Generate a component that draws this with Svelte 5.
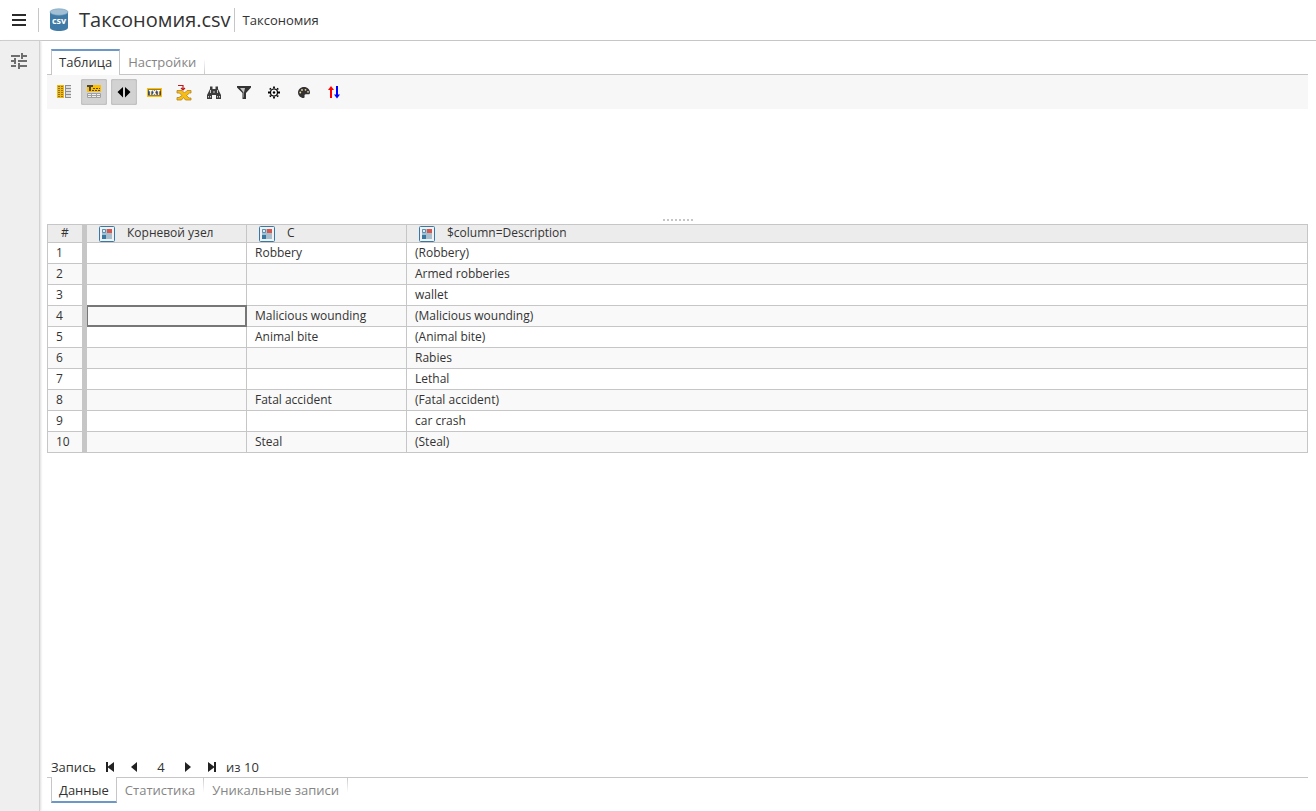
<script>
  const rows = [
    ['', 'Robbery', '(Robbery)'],
    ['', '', 'Armed robberies'],
    ['', '', 'wallet'],
    ['', 'Malicious wounding', '(Malicious wounding)'],
    ['', 'Animal bite', '(Animal bite)'],
    ['', '', 'Rabies'],
    ['', '', 'Lethal'],
    ['', 'Fatal accident', '(Fatal accident)'],
    ['', '', 'car crash'],
    ['', 'Steal', '(Steal)']
  ];
  const columns = ['Корневой узел', 'C', '$column=Description'];
  const tools = ['columns', 'header', 'fit', 'text', 'export', 'find', 'filter', 'settings', 'palette', 'sort'];
  const labels = ['Столбцы', 'Заголовок', 'Ширина', 'Текст', 'Экспорт', 'Поиск', 'Фильтр', 'Параметры', 'Цвета', 'Сортировка'];
  let pressed = $state([false, true, true, false, false, false, false, false, false, false]);
  let view = $state('Таблица');
  let section = $state('Данные');
  let current = $state(4);
  const go = (n) => (current = Math.min(rows.length, Math.max(1, n)));
</script>

<div class="app">
  <header>
    <button class="menu" aria-label="Меню">
      <svg width="16" height="12" viewBox="0 0 16 12"><path d="M1 0h14v2H1zM1 5h14v2H1zM1 10h14v2H1z" fill="#2b2b2b" /></svg>
    </button>
    <span class="rule"></span>
    <svg class="csv" width="20" height="24" viewBox="0 0 20 24">
      <path d="M1 4v15.500c0 2 4 3.500 9 3.500s9-1.500 9-3.500V4z" fill="#3f7ba6" />
      <ellipse cx="10" cy="4" rx="9" ry="3.200" fill="#a3bfd3" stroke="#6f9dbd" stroke-width=".6" />
      <text x="10" y="16" text-anchor="middle" font-size="9" font-weight="700" fill="#fff">csv</text>
    </svg>
    <h1>Таксономия.csv</h1>
    <span class="rule"></span>
    <span class="crumb">Таксономия</span>
  </header>

  <div class="body">
    <aside>
      <button aria-label="Параметры">
        <svg width="18" height="18" viewBox="0 0 18 18" fill="none" stroke="#6e6e6e" stroke-width="2">
          <path d="M1 4h9M13 4h4M12 1v6M1 9h4M8 9h9M5 6v6M1 14h5M10 14h7M9 11v6" />
        </svg>
      </button>
    </aside>

    <main>
      <nav class="tabs top">
        {#each ['Таблица', 'Настройки'] as t}
          <button class:active={view === t} onclick={() => (view = t)}>{t}</button>
        {/each}
      </nav>

      <div class="toolbar">
        {#each tools as tool, i}
          <button class:pressed={pressed[i]} aria-label={labels[i]} aria-pressed={pressed[i]} onclick={() => (pressed[i] = !pressed[i])}>
            <svg width="16" height="16" viewBox="0 0 16 16">
              {#if tool === 'columns'}
                <path d="M1 0h7v13H1z" fill="#f2b90c" />
                <path d="M2 1.500h2M5 1.500h2M2 3.500h2M5 3.500h2M2 5.500h2M5 5.500h2M2 7.500h2M5 7.500h2M2 9.500h2M5 9.500h2M2 11.500h2M5 11.500h2" stroke="#8a732c" />
                <path d="M9 0h6v13H9z" fill="#dedede" />
                <path d="M9.500 0v13M9 .5h6M10 3.500h5M10 6.500h5M10 9.500h5M10 12.500h5" stroke="#8c8c8c" fill="none" />
              {:else if tool === 'header'}
                <path d="M1 0h14v7H1z" fill="#fcbf06" />
                <path d="M1 1h6M4 1v5" stroke="#50482e" stroke-width="2" />
                <path d="M7 3.500h2M10 3.500h2M13 3.500h1M6 5.500h2M9 5.500h2M12 5.500h2" stroke="#50482e" />
                <path d="M1.500 8.500h13v4h-13zM1 10.500h14M5.500 8v5M10.500 8v5" fill="#eee" stroke="#a0a0a0" />
              {:else if tool === 'fit'}
                <path d="M7 2v10.500L1.500 7zM9 2v10.500L14.500 7z" fill="#000" />
              {:else if tool === 'text'}
                <path d="M1 3h15v9H1z" fill="#fcbf06" />
                <path d="M2 4.500h13v6H2z" fill="#454545" />
                <text x="8.500" y="9.750" text-anchor="middle" font-size="6" font-weight="800" fill="#fff">TXT</text>
              {:else if tool === 'export'}
                <path d="M1 5.500h5l2.500 2.500L11 5.500h4v2.500h-1.500l-3 2.500 2.500 2.500h2v2H9.500L7.500 12.500 5.500 15H1v-2.500h2l3-2L3.500 8H1z" fill="#f8bd13" stroke="#b18420" stroke-width=".8" />
                <path d="M2 .5h5V5M5 3l2 2 2-2" fill="none" stroke="#c3191b" stroke-width="1.200" />
              {:else if tool === 'find'}
                <path d="M4 1.500h2.500v2.500h3V1.500H12v2.500l3 6V14h-5v-4H6v4H1v-4l3-6z" fill="#3c3c3c" />
                <path d="M2.500 11v1.500M4.500 11v1.500M11.500 11v1.500M13.500 11v1.500M4.500 5v3M11.500 5v3M8 6v2" stroke="#f1f1f1" stroke-width=".8" />
              {:else if tool === 'filter'}
                <path d="M1 1h14v1.500L10 8v6H6.500V8L1 2.500z" fill="#333" />
                <path d="M4 3h5L8 7.500V12.500H7.500V7.500z" fill="#c4c4c4" />
              {:else if tool === 'settings'}
                <circle cx="8" cy="7.500" r="3.500" fill="none" stroke="#000" stroke-width="1.200" />
                <circle cx="8" cy="7.500" r="1.200" />
                <path d="M8 1.500v2M8 11.500v2M2 7.500h2M12 7.500h2M3.800 3.300l1 1M11.200 10.700l1 1M3.800 11.700l1-1M11.200 4.300l1-1" stroke="#000" stroke-width="1.800" />
              {:else if tool === 'palette'}
                <path d="M8 2c-3.500 0-6 2.500-6 5.500S4.700 13 7.500 13c1.500 0 1-1.500 1-2.500s.8-1.200 2-1.200h2c1 0 1.500-.8 1.500-1.800 0-3-2.500-5.500-6-5.500z" fill="#333" />
                <g fill="#f3d6a4"><circle cx="4.300" cy="7.500" r=".9" /><circle cx="6" cy="5" r=".9" /><circle cx="9.500" cy="4.800" r=".9" /><circle cx="12" cy="6.800" r=".9" /></g>
              {:else}
                <path d="M5 13V3" stroke="#f00" stroke-width="2" /><path d="M2 5l3-4 3 4z" fill="#f00" />
                <path d="M11 1v10" stroke="#00f" stroke-width="2" /><path d="M8 9.500h6l-3 4z" fill="#00f" />
              {/if}
            </svg>
          </button>
        {/each}
      </div>

      <div class="pane"><span class="grip"></span></div>

      <table>
        <colgroup><col class="num" /><col class="std" /><col class="std" /><col /></colgroup>
        <thead>
          <tr>
            <th scope="col">#</th>
            {#each columns as c}
              <th scope="col">
                <div class="head">
                  <svg width="16" height="16" viewBox="0 0 16 16">
                    <rect x=".5" y=".5" width="15" height="15" rx="1" fill="#f2f2f2" stroke="#3878a5" />
                    <path d="M3 3h10v10H3z" fill="#a8bfd0" />
                    <path d="M3.500 3.500h3v3h-3z" fill="#e6edf2" stroke="#5d90b4" />
                    <path d="M8 3h5v4H8z" fill="#d8564b" /><path d="M3 9h4v4H3z" fill="#3878a5" />
                  </svg>
                  <span>{c}</span>
                </div>
              </th>
            {/each}
          </tr>
        </thead>
        <tbody>
          {#each rows as row, r}
            <tr>
              <td>{r + 1}</td>
              {#each row as cell, c}
                <td class:selected={c === 0 && r + 1 === current}>{cell}</td>
              {/each}
            </tr>
          {/each}
        </tbody>
      </table>

      <div class="pager">
        <label for="record">Запись</label>
        <button aria-label="Первая" onclick={() => go(1)}><svg width="10" height="12" viewBox="0 0 10 12"><path d="M1 1h2v4.500L9 1v10L3 6.500V11H1z" /></svg></button>
        <button aria-label="Предыдущая" onclick={() => go(current - 1)}><svg width="10" height="12" viewBox="0 0 10 12"><path d="M8 1v10L2 6z" /></svg></button>
        <input id="record" value={current} onchange={(e) => go(Number(e.currentTarget.value) || 1)} />
        <button aria-label="Следующая" onclick={() => go(current + 1)}><svg width="10" height="12" viewBox="0 0 10 12"><path d="M2 1v10l6-5z" /></svg></button>
        <button aria-label="Последняя" onclick={() => go(rows.length)}><svg width="10" height="12" viewBox="0 0 10 12"><path d="M9 1H7v4.500L1 1v10l6-4.500V11h2z" /></svg></button>
        <span>из {rows.length}</span>
      </div>

      <nav class="tabs bottom">
        {#each ['Данные', 'Статистика', 'Уникальные записи'] as t}
          <button class:active={section === t} onclick={() => (section = t)}>{t}</button>
        {/each}
      </nav>
    </main>
  </div>
</div>

<style>
  :global(body) { margin: 0; }
  .app {
    min-height: 100vh;
    display: flex;
    flex-direction: column;
    font-family: "Open Sans", sans-serif;
    font-size: 13px;
    color: #333;
    background: #fff;
  }
  button {
    font: inherit;
    color: inherit;
    border: 0;
    padding: 0;
    background: none;
    display: flex;
    align-items: center;
    justify-content: center;
  }
  svg { display: block; flex: none; }
  header {
    height: 40px;
    display: flex;
    align-items: center;
    border-bottom: 1px solid #c6c6c6;
  }
  .menu { width: 38px; height: 40px; }
  .rule { width: 1px; height: 24px; background: #c6c6c6; }
  .csv { margin: 0 10px; }
  h1 { margin: 0 3px 0 0; font-size: 20px; line-height: 28px; font-weight: 400; }
  .crumb { margin-left: 8px; }
  .body { flex: 1; display: flex; }
  aside {
    width: 39px;
    flex: none;
    background: #efefef;
    border-right: 1px solid #d2d2d2;
    box-shadow: 1px 0 2px #ddd;
  }
  aside button { width: 38px; height: 40px; }
  main {
    flex: 1;
    min-width: 0;
    display: flex;
    flex-direction: column;
    padding: 8px 8px 8px 7px;
  }
  .tabs { display: flex; padding-left: 4px; }
  .tabs button {
    height: 25px;
    padding: 0 8px;
    color: #858585;
    border: 0 solid #c6c6c6;
    border-right: 1px solid;
  }
  .tabs button.active { color: #333; background: #fff; border: 1px solid #c6c6c6; padding: 0 7px; }
  .top { border-bottom: 1px solid #c6c6c6; }
  .top button { border-image: linear-gradient(transparent 40%, #c6c6c6) 1; }
  .tabs.top button.active { height: 26px; margin-bottom: -1px; padding-bottom: 2px; border-image: none; border-top: 2px solid #6b98c6; border-bottom: 0; }
  .bottom { height: 25px; border-top: 1px solid #c6c6c6; }
  .tabs.bottom button { height: 24px; border-image: linear-gradient(#c6c6c6, transparent 60%) 1; }
  .tabs.bottom button.active { height: 26px; margin-top: -1px; padding-top: 2px; border-image: none; border-top: 0; border-bottom: 2px solid #6b98c6; }
  .toolbar {
    height: 34px;
    padding-left: 4px;
    display: flex;
    align-items: center;
    gap: 4px;
    background: #f7f7f7;
  }
  .toolbar button { box-sizing: border-box; width: 26px; height: 26px; padding-top: 2px; border-radius: 2px; }
  .toolbar button.pressed { background: #d2d2d2; box-shadow: inset 0 0 2px #999; }
  .pane {
    height: 115px;
    display: flex;
    align-items: flex-end;
    justify-content: center;
  }
  .grip {
    width: 30px;
    height: 2px;
    margin-bottom: 3px;
    background: repeating-linear-gradient(90deg, #c6c6c6 0 2px, transparent 2px 4px);
  }
  table {
    width: 100%;
    table-layout: fixed;
    border-collapse: separate;
    border-spacing: 0;
    border: 0 solid #c6c6c6;
    border-width: 1px 0 0 1px;
    font-size: 12px;
  }
  .num { width: 39px; }
  .std { width: 160px; }
  th, td {
    box-sizing: border-box;
    height: 21px;
    padding: 0 8px;
    border: 0 solid #c6c6c6;
    border-width: 0 1px 1px 0;
    font-weight: 400;
    text-align: left;
    line-height: 16px;
    white-space: nowrap;
  }
  th { height: 18px; padding: 0 12px; background: #ececec; vertical-align: top; }
  th:first-child, td:first-child { border-right-width: 5px; }
  th:first-child { padding: 0; text-align: center; }
  .head { height: 17px; display: flex; align-items: flex-start; gap: 12px; }
  .head svg { margin-top: 1px; }
  tbody tr:nth-child(even) { background: #f9f9f9; }
  .selected { position: relative; }
  .selected::after {
    content: "";
    position: absolute;
    inset: -1px -1px -1px 0;
    border: 2px solid #777;
    border-left-width: 1px;
  }
  .pager {
    margin-top: auto;
    height: 20px;
    padding-left: 4px;
    display: flex;
    align-items: center;
  }
  .pager button { width: 24px; height: 20px; fill: #222; }
  .pager label { margin-right: 2px; }
  .pager input {
    box-sizing: border-box;
    width: 30px;
    height: 20px;
    border: 0;
    padding: 0;
    font: inherit;
    color: inherit;
    text-align: center;
    background: none;
  }
  .pager span { margin-left: 2px; }
</style>
